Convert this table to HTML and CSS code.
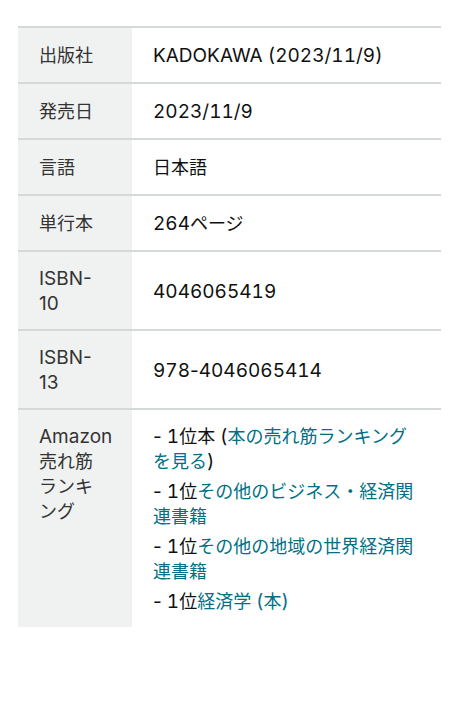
FILE: index.html
```html
<!DOCTYPE html>
<html lang="ja">
<head>
<meta charset="utf-8">
<link rel="stylesheet" href="styles.css">
</head>
<body>
<div class="wrap">
<table class="details">
  <colgroup><col class="c-label"><col class="c-value"></colgroup>
  <tr><th>出版社</th><td><span class="lat">KADOKAWA (2023/11/9)</span></td></tr>
  <tr><th>発売日</th><td><span class="lat">2023/11/9</span></td></tr>
  <tr><th>言語</th><td>日本語</td></tr>
  <tr><th>単行本</th><td><span class="lat">264</span>ページ</td></tr>
  <tr class="two"><th><span class="lat pn">ISBN-<wbr>10</span></th><td><span class="lat">4046065419</span></td></tr>
  <tr class="two"><th><span class="lat pn">ISBN-<wbr>13</span></th><td><span class="lat">978<span class="pn">-</span>4046065414</span></td></tr>
  <tr class="last">
    <th><span class="lat">Amazon</span> 売れ筋ランキング</th>
    <td>
      <ul class="rank">
        <li><span class="lat"><span class="pn">-</span> 1</span>位本 <span class="lat">(</span><a href="#">本の売れ筋ランキングを見る</a><span class="lat">)</span></li>
        <li><span class="lat"><span class="pn">-</span> 1</span>位<a href="#">その他のビジネス・経済関連書籍</a></li>
        <li><span class="lat"><span class="pn">-</span> 1</span>位<a href="#">その他の地域の世界経済関連書籍</a></li>
        <li><span class="lat"><span class="pn">-</span> 1</span>位<a href="#">経済学 <span class="lat">(</span>本<span class="lat">)</span></a></li>
      </ul>
    </td>
  </tr>
</table>
</div>
</body>
</html>
```
FILE: styles.css
```css
html, body {
  margin: 0;
  padding: 0;
  background: #ffffff;
}
body {
  font-family: Inter, "Noto Sans CJK JP", sans-serif;
  font-size: 18px;
  line-height: 25px;
  color: #0f1111;
  font-feature-settings: "tnum";
}
.lat {
  font-size: 19px;
  line-height: 1;
}
.pn {
  font-feature-settings: normal;
}
.wrap {
  padding: 26px 8px 0 18px;
}
.details {
  width: 423px;
  table-layout: fixed;
  border-collapse: collapse;
  border-spacing: 0;
}
.c-label {
  width: 114px;
}
.details tr {
  border-top: 2px solid #d5d8d8;
}
.details th {
  background: #f0f2f2;
  font-weight: normal;
  text-align: left;
  vertical-align: middle;
  padding: 15px 30px 14px 21px;
  color: #333;
}
.details td {
  padding: 15px 21px 14px 21px;
  vertical-align: middle;
}
.details tr.two th,
.details tr.two td {
  padding: 14px 21px 13px 21px;
}
.details tr.two th {
  padding-right: 30px;
}
.details tr.last th,
.details tr.last td {
  vertical-align: top;
  padding-top: 13.5px;
  padding-bottom: 13.5px;
}
.rank {
  list-style: none;
  margin: 0;
  padding: 0;
  display: flex;
  flex-direction: column;
  gap: 5px;
}
.rank a {
  color: #007185;
  text-decoration: none;
}
```
